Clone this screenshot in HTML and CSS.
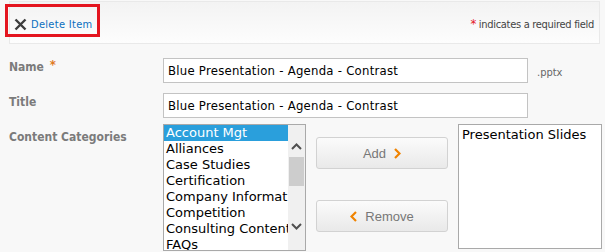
FILE: index.html
```html
<!DOCTYPE html>
<html>
<head>
<meta charset="utf-8">
<link rel="stylesheet" href="styles.css">
</head>
<body>
<div class="toolbar">
  <a class="delete">
    <svg class="x-icon" width="13" height="13" viewBox="0 0 13 13"><path d="M1.5 1.5 L11.5 11.5 M11.5 1.5 L1.5 11.5" stroke="#3d3d3d" stroke-width="2.4" stroke-linecap="butt"/></svg>
    <span>Delete Item</span>
    <span class="highlight"></span>
  </a>
  <div class="required"><span class="red">*</span> indicates a required field</div>
</div>
<div class="form">
  <div class="label">Name <span class="orange">*</span></div>
  <div class="field"><div class="input">Blue Presentation - Agenda - Contrast</div><span class="ext">.pptx</span></div>
  <div class="label">Title</div>
  <div class="field"><div class="input">Blue Presentation - Agenda - Contrast</div></div>
  <div class="label">Content Categories</div>
  <div class="field cats">
    <div class="listbox">
      <div class="items">
        <div class="item selected">Account Mgt</div>
        <div class="item">Alliances</div>
        <div class="item">Case Studies</div>
        <div class="item">Certification</div>
        <div class="item">Company Information</div>
        <div class="item">Competition</div>
        <div class="item">Consulting Content</div>
        <div class="item">FAQs</div>
      </div>
      <div class="scrollbar">
        <svg class="arrow up" width="11" height="7" viewBox="0 0 11 7"><path d="M1 6 L5.5 1.5 L10 6" fill="none" stroke="#505050" stroke-width="2"/></svg>
        <div class="thumb"></div>
        <svg class="arrow down" width="11" height="7" viewBox="0 0 11 7"><path d="M1 1 L5.5 5.5 L10 1" fill="none" stroke="#505050" stroke-width="2"/></svg>
      </div>
    </div>
    <div class="buttons">
      <div class="btn">Add <svg width="7" height="11" viewBox="0 0 7 11"><path d="M1 1 L5.5 5.5 L1 10" fill="none" stroke="#f08300" stroke-width="2.2"/></svg></div>
      <div class="btn"><svg width="7" height="11" viewBox="0 0 7 11"><path d="M6 1 L1.5 5.5 L6 10" fill="none" stroke="#f08300" stroke-width="2.2"/></svg> Remove</div>
    </div>
    <div class="listbox right">
      <div class="items"><div class="item">Presentation Slides</div></div>
    </div>
  </div>
</div>
</body>
</html>
```

FILE: styles.css
```css
html, body {
  margin: 0;
  padding: 0;
}
body {
  background: #f8f8f8;
  font-family: "DejaVu Sans Condensed", "DejaVu Sans", sans-serif;
  font-size: 13px;
  color: #000;
  width: 605px;
  height: 252px;
  overflow: hidden;
}
.toolbar {
  margin: 1px 5px 0 9px;
  height: 41px;
  border: 1px solid #e9e9e9;
  background: linear-gradient(#f3f3f3, #fdfdfd);
  display: flex;
  align-items: center;
  justify-content: space-between;
  padding: 0 5px 0 4px;
  font-size: 11px;
}
.delete {
  position: relative;
  display: flex;
  align-items: center;
  gap: 4px;
  color: #0b6fc0;
  margin-top: 4px;
  letter-spacing: 0.3px;
}
.x-icon {
  display: block;
}
.highlight {
  position: absolute;
  left: -9px;
  top: -14px;
  width: 89px;
  height: 27px;
  border: 3px solid #e4151f;
}
.required {
  color: #444;
  margin-top: 1px;
  letter-spacing: -0.3px;
}
.red {
  color: #e4151f;
  font-size: 13px;
}
.form {
  display: grid;
  grid-template-columns: 154px 1fr;
  row-gap: 10px;
  padding: 14px 0 0 9px;
}
.label {
  font-weight: bold;
  font-size: 12px;
  color: #7b7b7b;
  line-height: 16px;
  padding-top: 1px;
}
.orange {
  color: #e07a1f;
  font-size: 13px;
  position: relative;
  top: -2px;
  margin-left: 2px;
}
.field {
  display: flex;
  align-items: center;
}
.input {
  box-sizing: border-box;
  width: 365px;
  height: 25px;
  border: 1px solid #c3c3c3;
  background: #fff;
  padding-left: 4px;
  line-height: 23px;
  white-space: nowrap;
  letter-spacing: 0.25px;
}
.ext {
  margin-left: 9px;
  font-size: 11px;
  color: #666;
  margin-top: 3px;
}
.cats {
  align-items: flex-start;
  margin-top: -4px;
}
.listbox {
  box-sizing: border-box;
  width: 143px;
  height: 127px;
  border: 1px solid #a9a9a9;
  background: #fff;
  display: flex;
  overflow: hidden;
}
.items {
  flex: 1;
  min-width: 0;
  overflow: hidden;
  font-family: "DejaVu Sans", sans-serif;
}
.item {
  line-height: 16px;
  padding-left: 2px;
  white-space: nowrap;
  overflow: hidden;
}
.item.selected {
  background: #2a9fdc;
  color: #fff;
}
.scrollbar {
  flex: none;
  width: 17px;
  background: #f0f0f0;
  display: flex;
  flex-direction: column;
  align-items: center;
}
.arrow {
  display: block;
}
.arrow.up {
  margin-top: 18px;
}
.thumb {
  width: 15px;
  height: 29px;
  background: #cdcdcd;
  margin-top: 7px;
}
.arrow.down {
  margin-top: 37px;
}
.buttons {
  display: flex;
  flex-direction: column;
  gap: 31px;
  margin: 13px 10px 0 10px;
}
.btn {
  box-sizing: border-box;
  width: 132px;
  height: 32px;
  border: 1px solid #d2d2d2;
  border-radius: 3px;
  background: linear-gradient(#fbfbfb, #e9e9e9);
  display: flex;
  align-items: center;
  justify-content: center;
  gap: 8px;
  font-family: "Liberation Sans", Arial, sans-serif;
  font-size: 13px;
  color: #777;
}
.btn svg {
  display: block;
}
.listbox.right {
  width: 144px;
  height: 125px;
  padding-top: 2px;
}
.listbox.right .item {
  padding-left: 3px;
}
```
